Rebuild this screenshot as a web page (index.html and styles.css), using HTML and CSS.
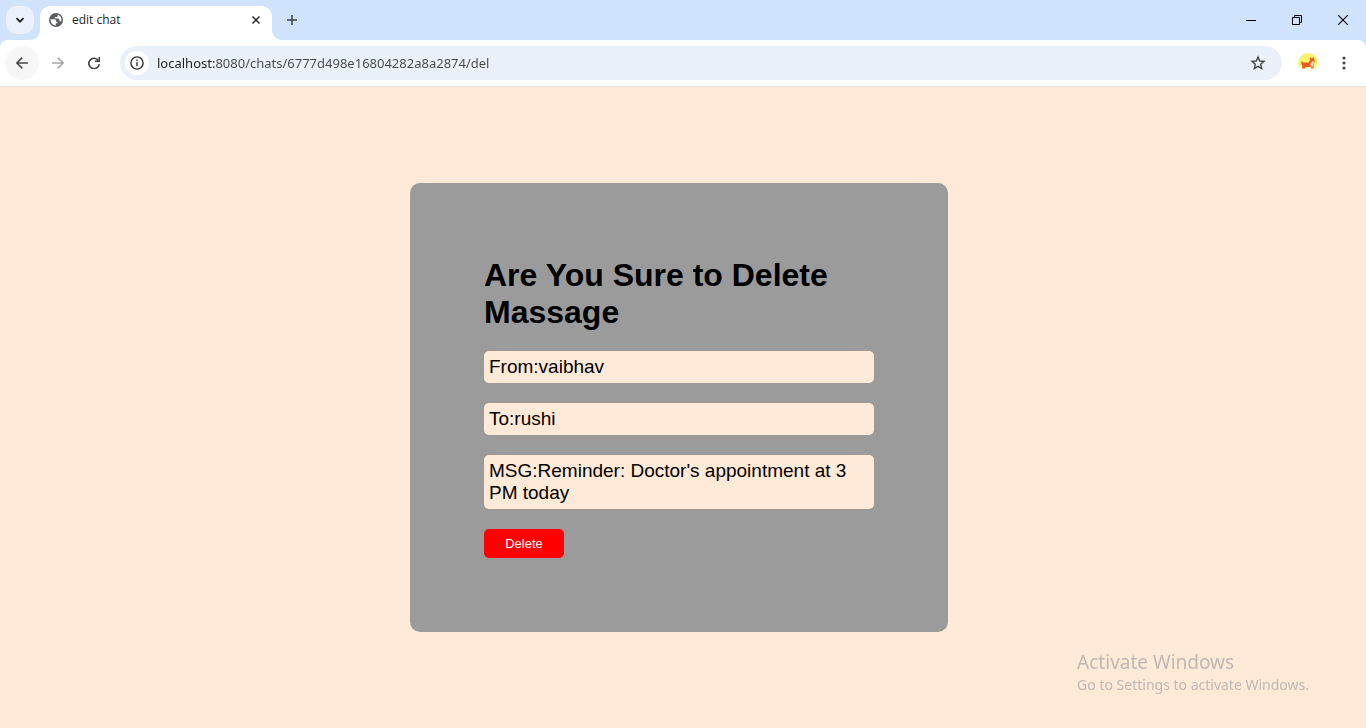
FILE: index.html
```html
<!DOCTYPE html>
<html lang="en">
<head>
<meta charset="utf-8">
<meta name="viewport" content="width=device-width, initial-scale=1">
<title>edit chat</title>
<link rel="stylesheet" href="styles.css">
</head>
<body>
<header class="browser">
  <div class="tabstrip">
    <button class="tab-search" type="button" aria-label="Search tabs">
      <svg width="10" height="10" viewBox="0 0 10 10"><path d="M1.5 3.2 5 6.7 8.5 3.2" fill="none" stroke="#1f1f1f" stroke-width="1.8"/></svg>
    </button>
    <div class="tab">
      <svg width="14" height="14" viewBox="0 0 14 14"><circle cx="7" cy="7" r="7" fill="#5a5e63"/><path d="M1.5 6.2h3.8c1 0 1.7.7 1.7 1.7v.8h1.5v1.6H6.8v2.2A5.5 5.5 0 0 1 1.5 7z" fill="#fff"/><path d="M8.8 1.8v.9c0 .8-.7 1.4-1.5 1.4H5.9v1.5h3.2c.8 0 1.3.5 1.3 1.3v1.3h1.9A5.6 5.6 0 0 0 8.800 1.800z" fill="#fff"/></svg>
      <span class="tab-title">edit chat</span>
      <button class="plain tab-close" type="button" aria-label="Close tab">
        <svg width="8" height="8" viewBox="0 0 8 8"><path d="M.5.5l7 7M7.5.5l-7 7" stroke="#1f1f1f" stroke-width="1.4"/></svg>
      </button>
    </div>
    <button class="plain new-tab" type="button" aria-label="New tab">
      <svg width="10" height="10" viewBox="0 0 10 10"><path d="M5 0v10M0 5h10" stroke="#3c4043" stroke-width="1.5"/></svg>
    </button>
    <div class="window-controls">
      <button class="plain" type="button" aria-label="Minimize"><svg width="10" height="10" viewBox="0 0 10 10"><path d="M0 5.5h10" stroke="#000"/></svg></button>
      <button class="plain" type="button" aria-label="Restore"><svg width="10" height="10" viewBox="0 0 10 10"><path d="M.5 2.5h7v7h-7zM2.5 2.5v-2h7v7h-2" fill="none" stroke="#000"/></svg></button>
      <button class="plain" type="button" aria-label="Close"><svg width="10" height="10" viewBox="0 0 10 10"><path d="M0 0l10 10M10 0 0 10" stroke="#000" stroke-width="1.1"/></svg></button>
    </div>
  </div>
  <div class="toolbar">
    <button class="plain nav nav-back" type="button" aria-label="Back"><svg width="12" height="12" viewBox="0 0 12 12"><path d="M12 6H1M6.3.6.9 6l5.400 5.400" fill="none" stroke="#474747" stroke-width="1.5"/></svg></button>
    <button class="plain nav" type="button" aria-label="Forward" disabled><svg width="12" height="12" viewBox="0 0 12 12"><path d="M0 6h11M5.7.6 11.1 6l-5.400 5.400" fill="none" stroke="#a8a8a8" stroke-width="1.5"/></svg></button>
    <button class="plain nav" type="button" aria-label="Reload"><svg width="12" height="12" viewBox="0 0 12 12"><path d="M10.3 3.500A5.200 5.200 0 1 0 11.200 7" fill="none" stroke="#3c4043" stroke-width="1.6"/><path d="M11.300 0v4.300H7" fill="none" stroke="#3c4043" stroke-width="1.5"/></svg></button>
    <div class="omnibox">
      <button class="plain site-info" type="button" aria-label="View site information"><svg width="14" height="14" viewBox="0 0 14 14"><circle cx="7" cy="7" r="6.1" fill="none" stroke="#303134" stroke-width="1.4"/><path d="M7 6v4.300M7 3.500V5" stroke="#303134" stroke-width="1.4"/></svg></button>
      <input class="url" type="text" aria-label="Address" spellcheck="false" value="localhost:8080/chats/6777d498e16804282a8a2874/del">
      <button class="plain bookmark" type="button" aria-label="Bookmark this tab"><svg width="16" height="16" viewBox="0 0 16 16"><path d="M8 2l1.700 4 4.300.4-3.300 2.900 1 4.300L8 11.300l-3.700 2.300 1-4.300L2 6.400 6.300 6z" fill="none" stroke="#474747" stroke-width="1.4"/></svg></button>
    </div>
    <button class="plain profile" type="button" aria-label="Profile"><svg width="20" height="20" viewBox="0 0 20 20"><defs><linearGradient id="glow" x1="0" y1="0" x2="0" y2="1"><stop offset=".55" stop-color="#fff36b"/><stop offset=".85" stop-color="#fffef4"/></linearGradient></defs><circle cx="10" cy="10" r="10" fill="url(#glow)"/><path d="M3 9.500c.3-1.500 1.500-1.500 2 0h5.500L12 7.500l.3-3.500 1.600 1.500 1.900-1.500.4 3.200 1.300 1.300-1.500 1.500v2.500L15 16h-1.300l-.7-2H7.500l-.8 1.500H4l.3-2.500z" fill="#ed5a22"/><path d="M14.500 8l2.300.7-1.300 1.300v3.500H13l-.5-3z" fill="#ffe4c2"/><path d="M4 15.500h2.700M13.500 15.500H15" stroke="#f7b58f"/></svg></button>
    <button class="plain menu" type="button" aria-label="Menu"><svg width="4" height="14" viewBox="0 0 4 14" fill="#474747"><circle cx="2" cy="2" r="1.600"/><circle cx="2" cy="7" r="1.600"/><circle cx="2" cy="12" r="1.600"/></svg></button>
  </div>
</header>
<main class="page">
  <form class="card">
    <h1 class="heading">Are You Sure to Delete Massage</h1>
    <p class="field">From:vaibhav</p>
    <p class="field">To:rushi</p>
    <p class="field">MSG:Reminder: Doctor's appointment at 3 PM today</p>
    <button class="delete" type="button">Delete</button>
  </form>
</main>
<aside class="watermark">
  <p class="watermark-title">Activate Windows</p>
  <p class="watermark-text">Go to Settings to activate Windows.</p>
</aside>
</body>
</html>
```

FILE: styles.css
```css
* {
  box-sizing: border-box;
}

body {
  margin: 0;
  min-height: 100vh;
  display: flex;
  flex-direction: column;
  background: #ffe9d7;
  color: #000;
  font-family: "Liberation Sans", Arial, sans-serif;
}

h1,
p {
  margin: 0;
}

svg {
  display: block;
}

.plain {
  display: flex;
  align-items: center;
  justify-content: center;
  padding: 0;
  border: 0;
  background: none;
}

.browser {
  background: #cfe3fc;
  border-bottom: 1px solid #dde1e6;
  font-family: "Open Sans", "Noto Sans", sans-serif;
}

.tabstrip {
  display: flex;
  height: 40px;
  padding: 6px 0 0 6px;
}

.tab-search {
  display: flex;
  align-items: center;
  justify-content: center;
  width: 28px;
  height: 28px;
  padding: 0;
  border: 0;
  border-radius: 10px;
  background: #ebf2fd;
}

.tab {
  position: relative;
  display: flex;
  align-items: center;
  gap: 9px;
  width: 232px;
  margin-left: 6px;
  padding: 0 12px 6px 9px;
  border-radius: 10px 10px 0 0;
  background: #fff;
}

.tab::before,
.tab::after {
  content: "";
  position: absolute;
  bottom: 0;
  width: 10px;
  height: 10px;
}

.tab::before {
  right: 100%;
  background: radial-gradient(circle at 0 0, transparent 10px, #fff 10px);
}

.tab::after {
  left: 100%;
  background: radial-gradient(circle at 100% 0, transparent 10px, #fff 10px);
}

.tab-title {
  flex: 1;
  color: #1f1f1f;
  font-size: 12px;
  line-height: 18px;
}

.new-tab {
  width: 28px;
  height: 28px;
  margin-left: 6px;
}

.window-controls {
  display: flex;
  height: 28px;
  margin-left: auto;
}

.window-controls button {
  width: 46px;
}

.toolbar {
  display: flex;
  align-items: center;
  height: 46px;
  padding: 0 12px 0 5px;
  border-radius: 8px 8px 0 0;
  background: #fff;
}

.nav {
  width: 34px;
  height: 34px;
  margin-right: 2px;
  border-radius: 50%;
}

.nav-back {
  background: #f7f7f7;
}

.omnibox {
  display: flex;
  align-items: center;
  flex: 1;
  height: 34px;
  margin-left: 7px;
  padding: 0 16px 0 5px;
  border-radius: 17px;
  background: #eaf1fa;
}

.site-info {
  width: 24px;
  height: 24px;
  border-radius: 50%;
  background: #fff;
}

.url {
  flex: 1;
  min-width: 0;
  margin-left: 8px;
  padding: 0;
  border: 0;
  outline: 0;
  background: linear-gradient(90deg, #1f1f1f 58px, #474747 58px);
  background-clip: text;
  color: transparent;
  font: 13px/20px "Noto Sans", "Open Sans", sans-serif;
}

.profile {
  margin-left: 16px;
}

.menu {
  width: 20px;
  height: 28px;
  margin-left: 16px;
}

.page {
  flex: 1;
  padding: 96px 16px 96px 8px;
}

.card {
  display: flex;
  flex-direction: column;
  gap: 20px;
  width: 100%;
  max-width: 538px;
  margin: 0 auto;
  padding: 74px;
  border-radius: 10px;
  background: #9b9b9b;
}

.heading {
  font-size: 32px;
  line-height: 37px;
}

.field {
  padding: 5px;
  border-radius: 5px;
  background: #ffe9d7;
  font-size: 19px;
  line-height: 22px;
}

.delete {
  align-self: flex-start;
  min-width: 80px;
  padding: 7px 20px;
  border: 0;
  border-radius: 5px;
  background: #f00;
  color: #fff;
  font: 13px/15px "Liberation Sans", Arial, sans-serif;
}

.watermark {
  position: fixed;
  right: 57px;
  bottom: 33px;
  color: #bfb9b3;
  font-family: "Noto Sans", "Open Sans", sans-serif;
  pointer-events: none;
}

.watermark-title {
  font-size: 19px;
  line-height: 26px;
}

.watermark-text {
  font-size: 14px;
  line-height: 20px;
}
```
